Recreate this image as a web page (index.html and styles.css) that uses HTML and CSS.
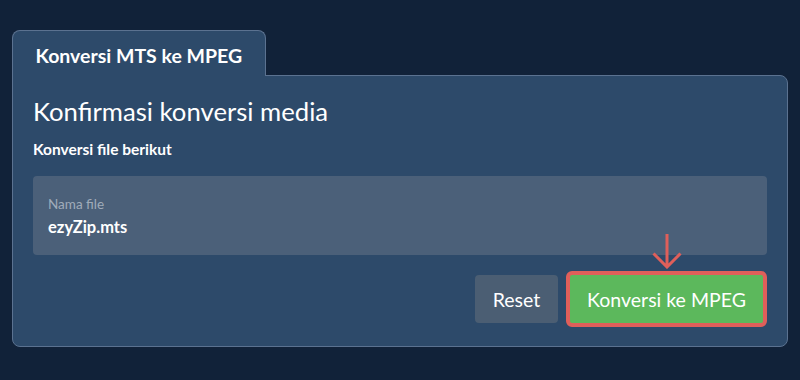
FILE: index.html
```html
<!DOCTYPE html>
<html lang="id">
<head>
    <meta charset="UTF-8">
    <meta name="viewport" content="width=device-width, initial-scale=1.0">
    <title>Konversi MTS ke MPEG</title>
    <link rel="stylesheet" href="styles.css">
</head>
<body>
    <div class="convert-wrap">
        <div class="tab">Konversi MTS ke MPEG</div>
        <div class="panel">
            <h2>Konfirmasi konversi media</h2>
            <p class="subtitle">Konversi file berikut</p>
            <div class="file-box">
                <div class="file-label">Nama file</div>
                <div class="file-name">ezyZip.mts</div>
            </div>
            <div class="actions">
                <button class="btn btn-reset">Reset</button>
                <div class="convert-holder">
                    <svg class="arrow" width="30" height="36" viewBox="0 0 30 36">
                        <path d="M15 1 V34 M1.5 20.5 L15 34 L28.5 20.5" fill="none" stroke="#df5f5a" stroke-width="3"/>
                    </svg>
                    <button class="btn btn-convert">Konversi ke MPEG</button>
                </div>
            </div>
        </div>
    </div>
</body>
</html>
```

FILE: styles.css
```css
body {
    font-family: Lato, "Open Sans", sans-serif;
    margin: 0;
    padding: 30px 12px 0;
    background-color: #112239;
    color: #fff;
}

.tab {
    display: inline-block;
    position: relative;
    z-index: 1;
    height: 19px;
    line-height: 19px;
    padding: 15px 22.5px 11px;
    margin-bottom: -1px;
    background: #2d4a6a;
    border: 1px solid #5b7290;
    border-bottom: none;
    border-radius: 8px 8px 0 0;
    font-size: 19.5px;
    font-weight: bold;
}

.panel {
    background: #2d4a6a;
    border: 1px solid #5b7290;
    border-radius: 0 8px 8px 8px;
    padding: 19px 20px 19px 20px;
}

.panel h2 {
    margin: 0;
    font-size: 25.7px;
    line-height: 32px;
    font-weight: normal;
}

.subtitle {
    margin: 13px 0 0;
    font-size: 15.5px;
    line-height: 19px;
    font-weight: bold;
}

.file-box {
    margin-top: 17px;
    background: #4b6079;
    border-radius: 4px;
    padding: 20px 15px;
    height: 39px;
}

.file-label {
    font-size: 13.5px;
    line-height: 16px;
    color: #a0acba;
}

.file-name {
    margin-top: 5px;
    font-size: 16.5px;
    line-height: 20px;
    font-weight: bold;
}

.actions {
    display: flex;
    justify-content: flex-end;
    align-items: center;
    gap: 8px;
    margin-top: 16px;
}

.btn {
    font-family: Lato, "Open Sans", sans-serif;
    font-size: 19.5px;
    color: #fff;
    border: none;
    border-radius: 4px;
    cursor: pointer;
}

.btn-reset {
    background: #4b5e73;
    height: 48px;
    width: 83px;
    padding: 0;
}

.convert-holder {
    position: relative;
}

.arrow {
    position: absolute;
    top: -38px;
    left: 50%;
    margin-left: -15px;
}

.btn-convert {
    display: block;
    background: #5cb85c;
    height: 56px;
    width: 201px;
    padding: 0;
    border: 4px solid #df5f5a;
    border-radius: 6px;
}
```
